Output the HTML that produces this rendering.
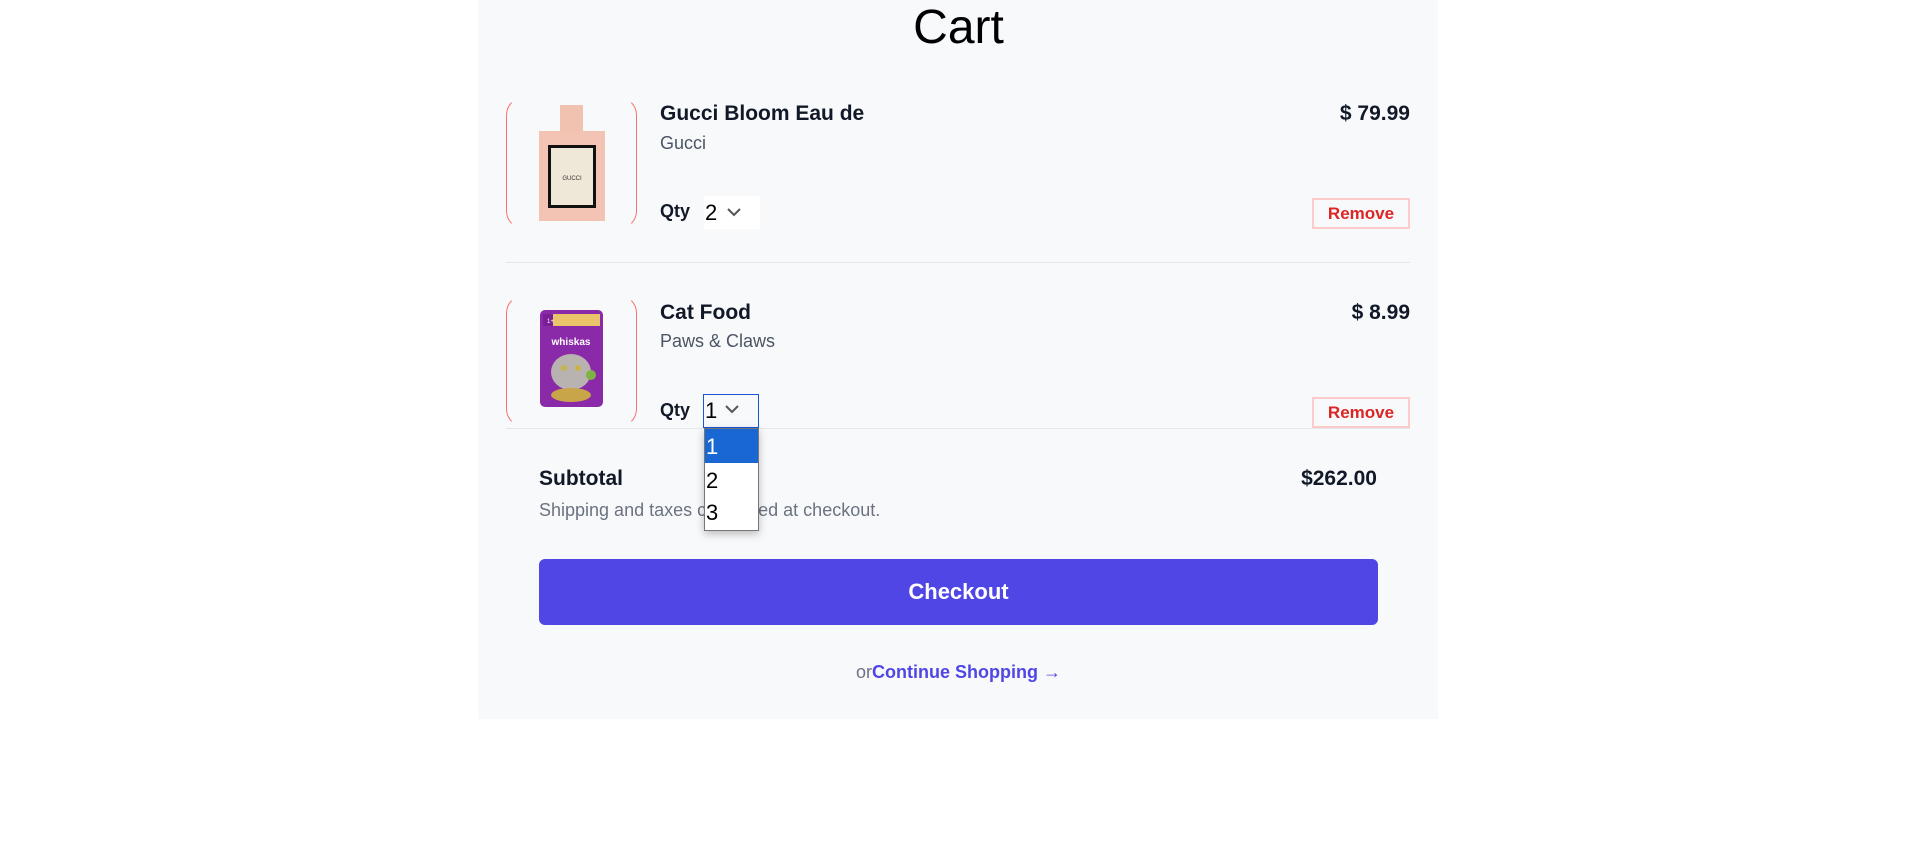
<!DOCTYPE html>
<html><head><meta charset="utf-8">
<style>
*{margin:0;padding:0;box-sizing:border-box}
body{width:1917px;height:852px;background:#fff;font-family:"Liberation Sans",sans-serif;position:relative;overflow:hidden;color:#111827}
.panel{position:absolute;left:478px;top:0;width:960px;height:719px;background:#f8f9fb}
.a{position:absolute;white-space:nowrap}
.title{left:0;width:1917px;text-align:center;top:0px;font-size:48px;color:#000}
.imgbox{position:absolute;width:131px;height:132px;border:1.5px solid #f87171;border-top-color:transparent;border-bottom-color:transparent;border-radius:18px;background:#f8f9fb}
.name{font-size:21px;font-weight:bold;color:#111827}
.brand{font-size:18px;color:#4b5563}
.price{font-size:21px;font-weight:bold;text-align:right}
.qty{font-size:18px;font-weight:bold}
.rm{position:absolute;width:98px;height:31px;border:2px solid #fecaca;color:#dc2626;font-size:17px;font-weight:bold;text-align:center;line-height:27px}
.sel{position:absolute;width:56px;height:33px;font-size:22px;color:#000;padding-left:1px;line-height:33px}
.hr{position:absolute;left:506px;width:904px;height:1px;background:#e5e7eb}
</style></head><body>
<div class="panel"></div>
<div class="a title">Cart</div>

<div class="imgbox" style="left:506px;top:97px"></div>
<svg class="a" style="left:537px;top:103px" width="72" height="120" viewBox="0 0 72 120">
<rect x="23" y="2" width="23" height="27" fill="#f1c2b0"/>
<rect x="2" y="28" width="66" height="90" fill="#f3c4b3"/>
<rect x="11" y="42" width="48" height="63" fill="#111"/>
<rect x="14" y="45" width="42" height="57" fill="#efe8d8"/>
<text x="35" y="77" font-size="6" text-anchor="middle" fill="#333" font-family="Liberation Sans">GUCCI</text>
</svg>
<div class="a name" style="left:660px;top:102px">Gucci Bloom Eau de</div>
<div class="a brand" style="left:660px;top:133px">Gucci</div>
<div class="a price" style="right:507px;top:102px">$ 79.99</div>
<div class="a qty" style="left:660px;top:201px">Qty</div>
<div class="sel" style="left:704px;top:196px;background:#fff">2 <span style="position:absolute;left:20px;top:-1px"><svg width="20" height="33"><path d="M4 14l6 6 6-6" stroke="#555" stroke-width="2" fill="none"/></svg></span></div>
<div class="rm" style="left:1312px;top:198px">Remove</div>

<div class="hr" style="top:262px"></div>

<div class="imgbox" style="left:506px;top:295px"></div>
<svg class="a" style="left:539px;top:310px" width="65" height="99" viewBox="0 0 65 99">
<rect x="1" y="0" width="63" height="97" rx="5" fill="#8b2aa8"/>
<rect x="4" y="4" width="57" height="12" fill="#e9c46a"/>
<rect x="4" y="4" width="10" height="12" fill="#7a1f95"/>
<text x="8" y="13" font-size="6" fill="#fff" font-family="Liberation Sans">1+</text>
<text x="32" y="35" font-size="10" font-weight="bold" text-anchor="middle" fill="#fff" font-family="Liberation Sans">whiskas</text>
<ellipse cx="32" cy="62" rx="20" ry="18" fill="#b8b2b0"/>
<circle cx="25" cy="58" r="3" fill="#c9b24a"/><circle cx="39" cy="58" r="3" fill="#c9b24a"/>
<ellipse cx="32" cy="85" rx="20" ry="7" fill="#c9a54a"/>
<circle cx="52" cy="65" r="5" fill="#7fb341"/>
</svg>
<div class="a name" style="left:660px;top:301px">Cat Food</div>
<div class="a brand" style="left:660px;top:331px">Paws &amp; Claws</div>
<div class="a price" style="right:507px;top:301px">$ 8.99</div>
<div class="a qty" style="left:660px;top:400px">Qty</div>
<div class="sel" style="left:703px;top:394px;border:1.5px solid #1a56db;height:34px;line-height:31px">1 <span style="position:absolute;left:18px;top:-1px"><svg width="20" height="33"><path d="M4 12l6 6 6-6" stroke="#555" stroke-width="2" fill="none"/></svg></span></div>
<div class="rm" style="left:1312px;top:397px">Remove</div>

<div class="hr" style="top:428px"></div>

<div class="a" style="left:539px;top:467px;font-size:21px;font-weight:bold">Subtotal</div>
<div class="a" style="right:540px;top:467px;font-size:21px;font-weight:bold">$262.00</div>
<div class="a" style="left:539px;top:500px;font-size:18px;color:#6b7280">Shipping and taxes calculated at checkout.</div>

<div class="a" style="left:704px;top:428px;width:55px;height:103px;background:#fff;border:1px solid #767676;box-shadow:0 3px 8px rgba(0,0,0,.25);font-size:22px;color:#000">
<div style="height:34px;background:#1967d2;color:#fff;line-height:36px;padding-left:1px">1</div>
<div style="height:34px;line-height:36px;padding-left:1px">2</div>
<div style="height:34px;line-height:32px;padding-left:1px">3</div>
</div>

<div class="a" style="left:539px;top:559px;width:839px;height:66px;background:#4f46e5;border-radius:6px;color:#fff;font-size:22px;font-weight:bold;text-align:center;line-height:66px">Checkout</div>

<div class="a" style="left:0;width:1917px;text-align:center;top:662px;font-size:18px;color:#6b7280">or<span style="color:#4f46e5;font-weight:bold">Continue Shopping</span> <span style="color:#4f46e5">→</span></div>
</body></html>
